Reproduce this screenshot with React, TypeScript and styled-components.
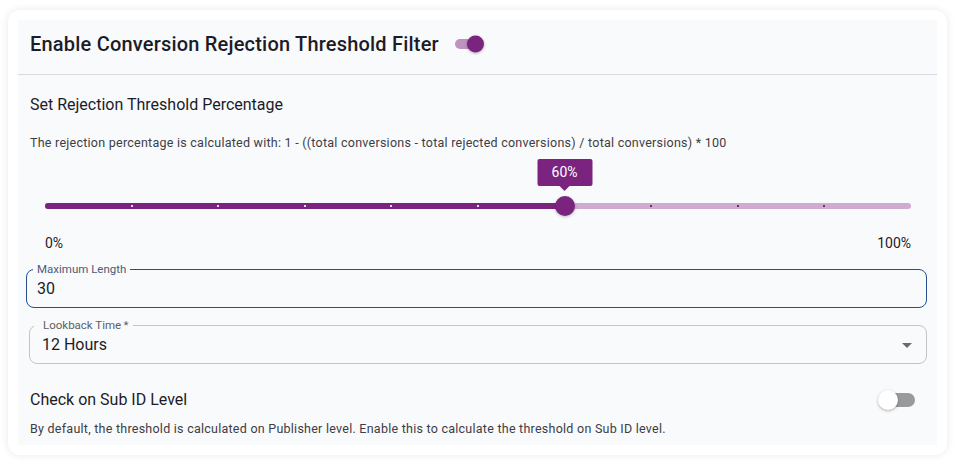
import React from "react";
import styled, { createGlobalStyle } from "styled-components";

const PURPLE = "#7b247f";
const FONT = `Roboto, "Noto Sans", "Liberation Sans", sans-serif`;

const Global = createGlobalStyle`
  html, body { margin: 0; padding: 0; background: #ffffff; }
  body { font-family: ${FONT}; color: #1c1c28; }
  * { box-sizing: border-box; }
`;

const Card = styled.div`
  margin: 10px 8px;
  width: 939px;
  height: 445px;
  padding: 10px;
  background: #ffffff;
  border-radius: 12px;
  box-shadow: 0 0 8px rgba(0, 0, 0, 0.09);
`;

const Panel = styled.div`
  height: 100%;
  background: #f9fafc;
  display: flex;
  flex-direction: column;
`;

const Header = styled.div`
  height: 55px;
  flex-shrink: 0;
  display: flex;
  align-items: flex-start;
  gap: 16px;
  padding: 10px 12px 0;
  border-bottom: 1px solid #d9dadf;
`;

const Title = styled.h2`
  margin: 0;
  font-size: 20px;
  line-height: 28px;
  font-weight: 500;
  letter-spacing: 0.2px;
  color: #1c1c28;
`;

const Body = styled.div`
  display: flex;
  flex-direction: column;
  padding: 0 12px 9px;
`;

const SectionTitle = styled.div`
  margin-top: 19px;
  font-size: 16px;
  line-height: 22px;
  color: #1c1c28;
`;

const Helper = styled.div<{ $mt: number }>`
  margin-top: ${(p) => p.$mt}px;
  font-size: 12.5px;
  letter-spacing: 0.25px;
  line-height: 18px;
  color: #3d3d44;
`;

/* ---------- switch ---------- */
const SwitchTrack = styled.span<{ $on: boolean; $small?: boolean }>`
  position: relative;
  display: inline-block;
  flex-shrink: 0;
  width: ${(p) => (p.$small ? 28 : 34)}px;
  height: ${(p) => (p.$small ? 10 : 14)}px;
  border-radius: 7px;
  background: ${(p) => (p.$on ? "#be93c1" : "#9a9a9a")};
`;

const SwitchThumb = styled.span<{ $on: boolean; $small?: boolean }>`
  position: absolute;
  top: 50%;
  width: ${(p) => (p.$small ? 17 : 20)}px;
  height: ${(p) => (p.$small ? 17 : 20)}px;
  border-radius: 50%;
  transform: translateY(-50%);
  ${(p) => (p.$on ? "right: -1px;" : "left: -3px;")}
  background: ${(p) => (p.$on ? PURPLE : "#ffffff")};
  box-shadow: 0 1px 3px rgba(0, 0, 0, 0.3);
`;

const HeaderSwitchWrap = styled.div`
  height: 28px;
  display: flex;
  align-items: center;
`;

const Switch = ({ on, small }: { on: boolean; small?: boolean }) => (
  <SwitchTrack $on={on} $small={small}>
    <SwitchThumb $on={on} $small={small} />
  </SwitchTrack>
);

/* ---------- slider ---------- */
const SliderRoot = styled.div`
  position: relative;
  margin: 44px 14px 0 15px;
  height: 20px;
`;

const Rail = styled.div`
  position: absolute;
  left: 0;
  right: 0;
  top: 7px;
  height: 6px;
  border-radius: 3px;
  background: #cfaad1;
`;

const Track = styled.div`
  position: absolute;
  left: 0;
  top: 7px;
  height: 6px;
  border-radius: 3px;
  background: ${PURPLE};
`;

const Mark = styled.span<{ $active: boolean }>`
  position: absolute;
  top: 9px;
  width: 2px;
  height: 2px;
  margin-left: -1px;
  background: ${(p) => (p.$active ? "#ead7eb" : PURPLE)};
`;

const Thumb = styled.span`
  position: absolute;
  top: 0;
  width: 20px;
  height: 20px;
  margin-left: -10px;
  border-radius: 50%;
  background: ${PURPLE};
  box-shadow: 0 1px 3px rgba(0, 0, 0, 0.25);
`;

const ValueLabel = styled.span`
  position: absolute;
  bottom: 30px;
  left: 50%;
  transform: translateX(-50%);
  width: 55px;
  height: 27px;
  border-radius: 2px;
  background: ${PURPLE};
  color: #ffffff;
  font-size: 14px;
  line-height: 27px;
  text-align: center;
  &::after {
    content: "";
    position: absolute;
    left: 50%;
    bottom: -5px;
    margin-left: -5px;
    border-left: 5px solid transparent;
    border-right: 5px solid transparent;
    border-top: 5px solid ${PURPLE};
  }
`;

const RangeLabels = styled.div`
  margin: 17px 14px 0 15px;
  display: flex;
  justify-content: space-between;
  font-size: 14px;
  line-height: 20px;
  color: #1c1c28;
`;

/* ---------- outlined fields ---------- */
const Field = styled.fieldset<{ $focused?: boolean; $ml: number; $mt: number }>`
  margin: ${(p) => p.$mt}px -2px 0 ${(p) => p.$ml}px;
  padding: 0;
  min-width: 0;
  border: 1px solid ${(p) => (p.$focused ? "#264f8c" : "#c4c4c4")};
  border-radius: 8px;
  height: 46px;
  display: block;
`;

const Legend = styled.legend<{ $focused?: boolean }>`
  margin-left: ${(p) => (p.$focused ? 6 : 4)}px;
  padding: ${(p) => (p.$focused ? "0 4px" : "0 5px 0 9px")};
  font-size: 11.5px;
  line-height: 14px;
  color: ${(p) => (p.$focused ? "#4c5b78" : "#5e5e66")};
`;

const FieldValue = styled.div<{ $pl: number }>`
  display: flex;
  align-items: center;
  justify-content: space-between;
  padding: 3px 14px 0 ${(p) => p.$pl}px;
  font-size: 16px;
  line-height: 20px;
  color: #1c1c28;
`;

const Caret = styled.span`
  width: 0;
  height: 0;
  border-left: 5px solid transparent;
  border-right: 5px solid transparent;
  border-top: 5px solid #6b6b6b;
`;

const SwitchRow = styled.div`
  margin-top: 25px;
  display: flex;
  align-items: center;
  justify-content: space-between;
  padding-right: 10px;
`;

const RowTitle = styled.div`
  font-size: 16px;
  line-height: 22px;
  color: #1c1c28;
`;

const VALUE = 60;
const marks = [10, 20, 30, 40, 50, 70, 80, 90];

export default function App() {
  return (
    <>
      <Global />
      <Card>
        <Panel>
          <Header>
            <Title>Enable Conversion Rejection Threshold Filter</Title>
            <HeaderSwitchWrap>
              <Switch on small />
            </HeaderSwitchWrap>
          </Header>
          <Body>
            <SectionTitle>Set Rejection Threshold Percentage</SectionTitle>
            <Helper $mt={18}>
              The rejection percentage is calculated with: 1 - ((total conversions - total rejected
              conversions) / total conversions) * 100
            </Helper>
            <SliderRoot>
              <Rail />
              <Track style={{ width: `${VALUE}%` }} />
              {marks.map((m) => (
                <Mark key={m} $active={m < VALUE} style={{ left: `${m}%` }} />
              ))}
              <Thumb style={{ left: `${VALUE}%` }}>
                <ValueLabel>{VALUE}%</ValueLabel>
              </Thumb>
            </SliderRoot>
            <RangeLabels>
              <span>0%</span>
              <span>100%</span>
            </RangeLabels>
            <Field $focused $ml={-4} $mt={9}>
              <Legend $focused>Maximum Length</Legend>
              <FieldValue $pl={10}>30</FieldValue>
            </Field>
            <Field $ml={-1} $mt={10}>
              <Legend>Lookback Time&thinsp;*</Legend>
              <FieldValue $pl={12}>
                <span>12 Hours</span>
                <Caret />
              </FieldValue>
            </Field>
            <SwitchRow>
              <RowTitle>Check on Sub ID Level</RowTitle>
              <Switch on={false} />
            </SwitchRow>
            <Helper $mt={9}>
              By default, the threshold is calculated on Publisher level. Enable this to calculate the
              threshold on Sub ID level.
            </Helper>
          </Body>
        </Panel>
      </Card>
    </>
  );
}
